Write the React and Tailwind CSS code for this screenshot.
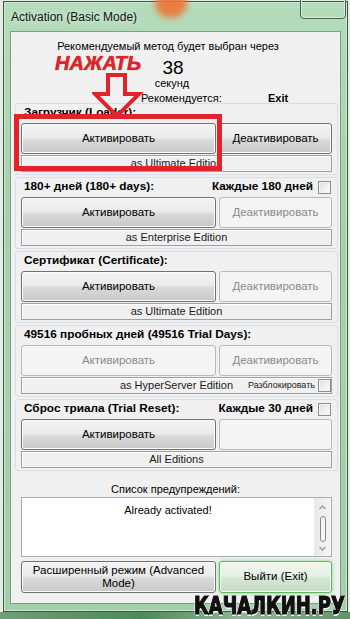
import React from 'react';

const sections = [
  { label: 'Загрузчик (Loader):', act: true, deact: true, edition: 'as Ultimate Edition' },
  { label: '180+ дней (180+ days):', right: 'Каждые 180 дней', act: true, deact: false, edition: 'as Enterprise Edition' },
  { label: 'Сертификат (Certificate):', act: true, deact: false, edition: 'as Ultimate Edition' },
  { label: '49516 пробных дней (49516 Trial Days):', act: false, deact: false, edition: 'as HyperServer Edition', unlock: true },
  { label: 'Сброс триала (Trial Reset):', right: 'Каждые 30 дней', act: true, deact: 'empty', edition: 'All Editions' },
];

const btnOn =
  'flex items-center justify-center rounded-[3px] border border-[#707070] bg-[linear-gradient(#f3f3f3,#ebebeb_45%,#d9d9d9_55%,#c8c8c8)] shadow-[inset_0_0_0_1px_#fbfbfb] text-black';
const btnOff =
  'flex items-center justify-center rounded-[3px] border border-[#b5b9bc] bg-[#f4f4f4] text-[#8a8a8a]';

function CheckBox() {
  return (
    <span className="block w-[13px] h-[13px] border border-[#8e8f8f] bg-[linear-gradient(135deg,#dcdcdc,#ffffff)] shadow-[inset_0_0_0_1px_#f4f4f4]" />
  );
}

function Section({ s, first }) {
  return (
    <div
      className={`ml-[4px] w-[323px] h-[72px] rounded-[3px] border border-[#d5dfe5] px-[5px] pt-[1px] ${
        first ? '' : 'mt-[2px]'
      }`}
    >
      <div className="h-[16px] flex items-center justify-between pl-[3px] pr-[1px] font-bold text-[11.8px]">
        <span>{s.label}</span>
        {s.right && (
          <span className="flex items-center gap-[5px]">
            {s.right}
            <CheckBox />
          </span>
        )}
      </div>
      <div className="mt-[2px] h-[31px] flex gap-[3px]">
        <div className={`w-[195px] text-[11.5px] ${s.act ? btnOn : btnOff}`}>Активировать</div>
        <div className={`w-[113px] text-[11.5px] ${s.deact === true ? btnOn : btnOff}`}>
          {s.deact === 'empty' ? '' : 'Деактивировать'}
        </div>
      </div>
      <div className="relative mt-[1px] h-[17px] border border-[#a0a0a0] bg-[#f0f0f0] shadow-[inset_1px_1px_0_#ffffff] flex items-center justify-center text-[#1a1a1a]">
        {s.edition}
        {s.unlock && (
          <span className="absolute right-0 top-[1px] flex items-center gap-[3px] text-[9px]">
            Разблокировать
            <CheckBox />
          </span>
        )}
      </div>
    </div>
  );
}

export default function App() {
  return (
    <div className="relative w-[350px] h-[619px] overflow-hidden bg-[#e4eee5] font-['Liberation_Sans',Arial,sans-serif] text-[11px] leading-none text-black">
      <div className="ml-[3px] mt-[1px] w-[345px] h-[611px] border border-[#3d5443] bg-[linear-gradient(#b4dcbb,#a6d3ad_30%,#a3d0aa)] shadow-[inset_0_0_0_1px_#cfe9d3]">
        <div className="h-[29px] flex items-center pl-[7px] text-[12px] text-[#151515] [text-shadow:0_0_6px_#e9f7ec]">
          Activation (Basic Mode)
        </div>

        <div className="relative ml-[6px] w-[331px] h-[573px] border border-[#7f9c85] bg-[#f0f0f0]">
          <div className="h-[71px] pt-[8px]">
            <div className="h-[13px] flex items-center justify-center pr-[15px]">
              Рекомендуемый метод будет выбран через
            </div>
            <div className="mt-[5px] h-[18px] flex items-center justify-center pr-[5px] text-[19px]">38</div>
            <div className="h-[14px] flex items-center justify-center pr-[7px]">секунд</div>
            <div className="mt-[1px] h-[14px] flex items-center pl-[130px]">
              <span className="w-[127px]">Рекомендуется:</span>
              <span className="font-bold">Exit</span>
            </div>
          </div>

          {sections.map((s, i) => (
            <Section key={i} s={s} first={i === 0} />
          ))}

          <div className="mt-[11px] h-[14px] flex items-center justify-center">Список предупреждений:</div>
          <div className="ml-[10px] mt-[1px] w-[311px] h-[60px] border border-[#abadb3] bg-white flex">
            <div className="flex-1 pt-[7px] text-center">Already activated!</div>
            <div className="w-[17px] bg-[linear-gradient(90deg,#e8e8e8,#f5f5f5)] flex flex-col items-center">
              <svg width="9" height="9" viewBox="0 0 9 9" className="mt-[5px]">
                <path d="M1.5 6 L4.5 3 L7.5 6" fill="none" stroke="#9a9a9a" strokeWidth="1.3" />
              </svg>
              <div className="mt-[4px] w-[6px] h-[26px] rounded-[3px] border border-[#8a8a8a] bg-[#f6f6f6]" />
              <svg width="9" height="9" viewBox="0 0 9 9" className="mt-[2px]">
                <path d="M1.5 3 L4.5 6 L7.5 3" fill="none" stroke="#9a9a9a" strokeWidth="1.3" />
              </svg>
            </div>
          </div>
          <div className="ml-[10px] mt-[4px] h-[32px] flex gap-[3px]">
            <div className={`w-[195px] text-center text-[11.5px] leading-[13px] ${btnOn}`}>
              Расширенный режим (Advanced
              <br />
              Mode)
            </div>
            <div className="w-[113px] text-[11.5px] flex items-center justify-center rounded-[3px] border border-[#59b95c] bg-[linear-gradient(#f1f8f1,#e6f1e6_45%,#d3e6d3_55%,#c6dcc6)] shadow-[0_0_4px_#7fdc82,inset_0_0_0_1px_#f7fff7]">
              Выйти (Exit)
            </div>
          </div>
        </div>
      </div>
      <div className="h-[7px] bg-[linear-gradient(90deg,#6f9f75,#4f8a57_40%,#8eb894_70%,#5f9466)]" />

      {/* glass details */}
      <div className="absolute left-[155px] top-[-12px] w-[32px] h-[30px] rounded-full bg-[#ee7436] blur-[3px] opacity-90" />
      <div className="absolute left-[300px] top-[-2px] w-[46px] h-[21px] rounded-b-[4px] border border-[#4a5e50] shadow-[inset_0_0_0_1px_#d9efdc]" />

      {/* annotations */}
      <div className="absolute left-[55px] top-[55px] leading-[16px] text-[20px] font-bold italic text-[#e2232b] [text-shadow:0_0_1px_#8a1015]">
        НАЖАТЬ
      </div>
      <svg className="absolute left-[92px] top-[70px]" width="52" height="50" viewBox="92 70 52 50">
        <path
          d="M108 75 H125 V94 H139 L117 116 L95 94 H108 Z"
          fill="none"
          stroke="#e2232b"
          strokeWidth="4"
          strokeLinejoin="miter"
        />
      </svg>
      <div className="absolute left-[14px] top-[114px] w-[208px] h-[57px] border-[5px] border-[#e2232b]" />

      <div className="absolute left-[194px] top-[594px] origin-top scale-y-[1.2] text-[20px] font-black font-['DejaVu_Sans_Condensed','DejaVu_Sans',sans-serif] text-[#111] [-webkit-text-stroke:1px_#111] [text-shadow:1px_0_0_#fff,-1px_0_0_#fff,0_1px_0_#fff,0_-1px_0_#fff]">
        КАЧАЛКИН.РУ
      </div>
    </div>
  );
}
